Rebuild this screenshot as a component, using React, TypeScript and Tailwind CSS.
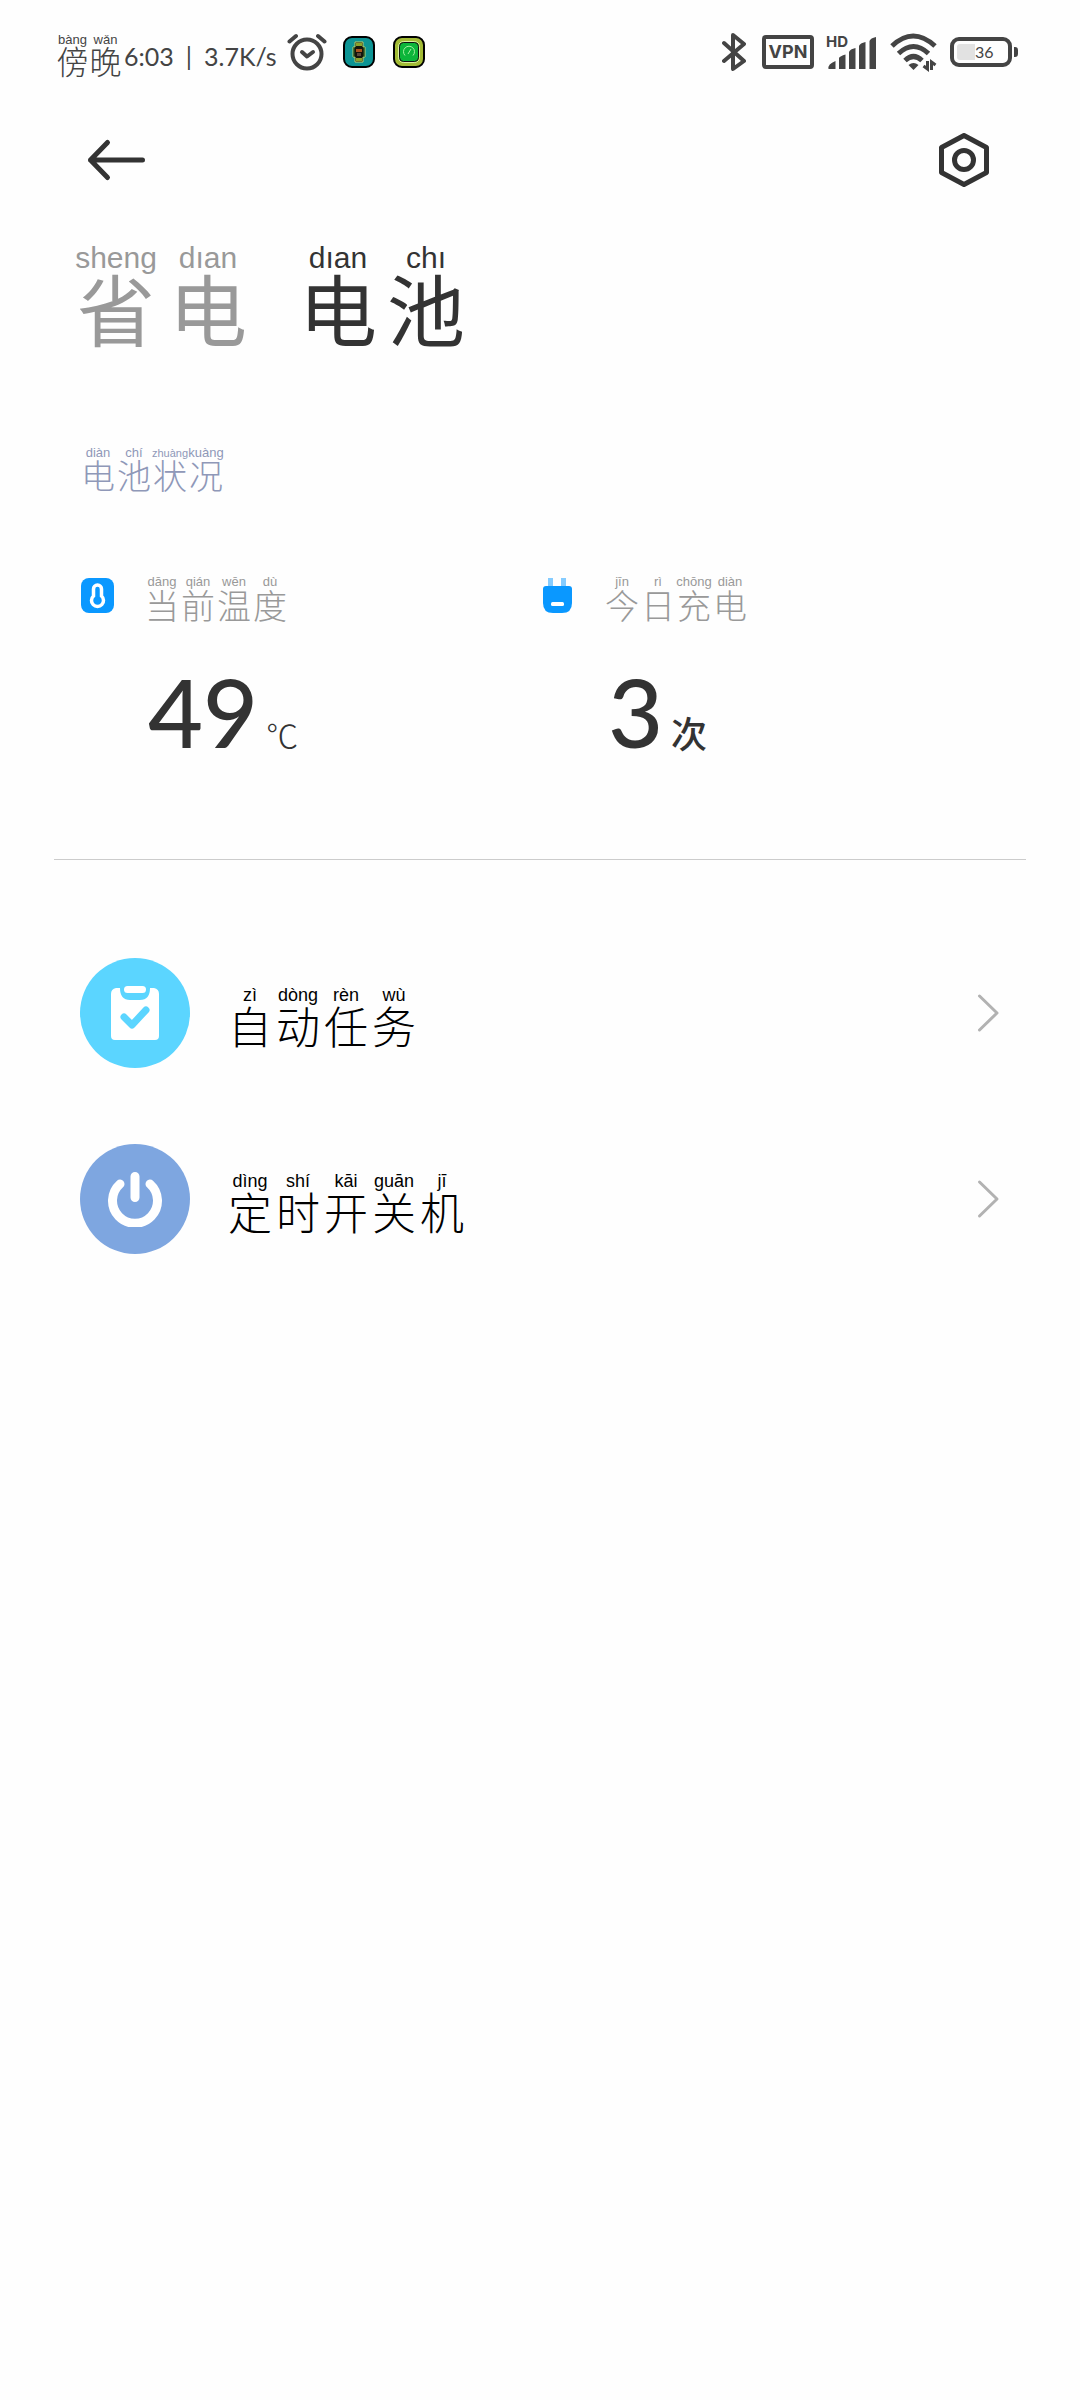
import React from "react";

type Syllable = [hanzi: string, pinyin: string];

interface PinyinProps {
  text: Syllable[];
  cell: string;
  hanzi: string;
  pinyin: string;
}

// One column per character, reading above the glyph
function Pinyin({ text, cell, hanzi, pinyin }: PinyinProps) {
  return (
    <span className="flex">
      {text.map(([char, reading], i) => (
        <span key={i} className={`flex shrink-0 flex-col items-center whitespace-nowrap ${cell}`}>
          <span className={`font-['Liberation_Sans',sans-serif] ${reading.length > 5 ? "text-[11px] leading-4" : pinyin}`}>
            {reading}
          </span>
          <span className={hanzi}>{char}</span>
        </span>
      ))}
    </span>
  );
}

function StatusBar() {
  return (
    <header className="flex h-[104px] items-center justify-between pr-[62px] pl-14 text-[#444]">
      <div className="flex items-center">
        <Pinyin
          text={[["傍", "bàng"], ["晚", "wǎn"]]}
          cell="w-[33px]"
          hanzi="text-[32px] leading-6 font-light"
          pinyin="text-[13px] leading-4"
        />
        <span className="ml-0.5 flex items-center gap-3 pt-2 font-['Lato',sans-serif] text-[25px] leading-8">
          <span>6:03</span>
          <span>|</span>
          <span>3.7K/s</span>
        </span>
        <svg className="ml-2.5 h-10 w-10" viewBox="0 0 40 40" fill="none" stroke="currentColor" strokeWidth="4" strokeLinecap="round">
          <circle cx="20" cy="22" r="14.5" />
          <path d="M2.5 9.5 9 4M31 4l6.500 5.500" />
          <path d="m15 20 5 4.500 6-4.500" strokeLinejoin="round" />
        </svg>
        <svg className="ml-4 h-8 w-8" viewBox="0 0 32 32">
          <rect x="1" y="1" width="30" height="30" rx="8" fill="#0d9494" stroke="#000" strokeWidth="2" />
          <path d="M12 6h8v5h2v10h-2v5h-8v-5h-2V11h2z" fill="#14150d" stroke="#b9cf6a" strokeWidth="1" />
          <path d="M13 7h6v3h-6zM13 22h6v3h-6z" fill="#8aa32c" />
          <path d="M11 11v10M21 11v10" stroke="#2f6a2a" strokeWidth="1" />
          <path d="M13 13h6v3h-6z" fill="#a85420" />
          <path d="M14 17h4v3h-4z" fill="#5b4a3c" />
        </svg>
        <svg className="ml-[18px] h-8 w-8" viewBox="0 0 32 32">
          <rect x="1" y="1" width="30" height="30" rx="8" fill="#a3bb35" stroke="#000" strokeWidth="2" />
          <rect x="5.500" y="5.500" width="21" height="21" rx="5" fill="none" stroke="#d9f0a0" />
          <rect x="6.500" y="6.500" width="19" height="19" rx="4" fill="#0cb53a" stroke="#111" />
          <path d="M12 19.500a5.500 5.500 0 1 1 8 0M15 18l3-5" fill="none" stroke="#a5f0a0" />
        </svg>
      </div>

      <div className="flex items-center">
        <svg className="h-10 w-6" viewBox="0 0 24 40" fill="none" stroke="currentColor" strokeWidth="4" strokeLinecap="round" strokeLinejoin="round">
          <path d="M2 11 22 29 11 37V3l11 9L2 29" />
        </svg>
        <span className="ml-4 flex h-[34px] w-[52px] items-center justify-center rounded-[4px] border-4 border-current font-['Inter',sans-serif] text-[18px] leading-5 font-bold">
          VPN
        </span>
        <span className="relative ml-3 h-10 w-[52px]">
          <span className="absolute top-0 left-0 font-['Inter',sans-serif] text-[15px] leading-5 font-bold">HD</span>
          <svg className="h-10 w-[52px]" viewBox="0 0 52 40" fill="currentColor">
            <path d="M2.500 37q-1-5 7-8v8zM13 26q1-2 6.500-3.500V37H13zM23 20q1-3 6.500-4V37H23zM33 14q1-3 6.500-4V37H33zM43.500 9q1-3 6.500-4v32h-6.500z" />
          </svg>
        </span>
        <svg className="ml-3 h-10 w-12" viewBox="0 0 48 40" fill="none" stroke="currentColor" strokeWidth="5">
          <path d="M2 14q21-20 43 0M8.500 21.500q15-14 30 0M15 28.500q8.500-8 17 0" />
          <path d="M18.500 33q5-4 10 0l-5 5z" fill="currentColor" stroke="none" />
          <path d="M37.500 29v8l-4-3M41.500 38v-8l4 3" strokeWidth="3" />
        </svg>
        <span className="ml-3 flex h-[30px] w-[62px] items-center rounded-[9px] border-4 border-current p-[3px]">
          <span className="h-4 w-[18px] rounded-l-[3px] bg-[#e2e2e2]" />
          <span className="font-['Lato',sans-serif] text-[16px] leading-5">36</span>
        </span>
        <span className="ml-0.5 h-[10px] w-1 rounded-r-[3px] bg-[#444]" />
      </div>
    </header>
  );
}

function Toolbar() {
  return (
    <div className="flex h-28 items-center justify-between pr-[90px] pl-[86px] text-[#333]">
      <button type="button" aria-label="返回">
        <svg className="h-11 w-[60px]" viewBox="0 0 60 44" fill="none" stroke="currentColor" strokeWidth="5" strokeLinecap="round" strokeLinejoin="round">
          <path d="M56.500 22H4.500M21.500 4.500 4.500 22l17 17.500" />
        </svg>
      </button>
      <button type="button" aria-label="设置">
        <svg className="h-[54px] w-[52px]" viewBox="0 0 52 54" fill="none" stroke="currentColor" strokeWidth="5" strokeLinejoin="round">
          <path d="M26 2.500 48.500 14.500v25L26 51.500 3.500 39.500v-25z" />
          <circle cx="26" cy="27" r="9.500" />
        </svg>
      </button>
    </div>
  );
}

const tabHanzi = "text-[78px] leading-[66px] font-normal";
const tabPinyin = "text-[30px] leading-8";

function Tabs() {
  return (
    <nav className="flex gap-10 pt-[26px] pl-[70px]">
      <button type="button" className="text-[#999]">
        <Pinyin text={[["省", "sheng"], ["电", "dıan"]]} cell="w-[92px]" hanzi={tabHanzi} pinyin={tabPinyin} />
      </button>
      <button type="button" className="text-[#333]" aria-current="page">
        <Pinyin text={[["电", "dıan"], ["池", "chı"]]} cell="w-[88px]" hanzi={tabHanzi} pinyin={tabPinyin} />
      </button>
    </nav>
  );
}

interface StatProps {
  icon: React.ReactNode;
  label: Syllable[];
  value: string;
  unit: string;
  unitClass: string;
}

const labelHanzi = "text-[34px] leading-7 font-light";
const labelPinyin = "text-[13px] leading-[18px]";

function Stat({ icon, label, value, unit, unitClass }: StatProps) {
  return (
    <div className="w-[460px] shrink-0">
      <div className="flex items-center">
        {icon}
        <div className="ml-7 text-[#999]">
          <Pinyin text={label} cell="w-9" hanzi={labelHanzi} pinyin={labelPinyin} />
        </div>
      </div>
      <div className="mt-8 ml-[68px] flex items-baseline gap-2 text-[#333]">
        <span className="font-['Lato',sans-serif] text-[95px] leading-[120px] font-medium">{value}</span>
        <span className={unitClass}>{unit}</span>
      </div>
    </div>
  );
}

const thermometer = (
  <svg className="h-9 w-9" viewBox="0 0 36 36">
    <rect x="1" y="0" width="33" height="35" rx="8" fill="#0a98ff" />
    <path d="M13.500 18v-7a4 4 0 0 1 8 0v7a6 6 0 1 1-8 0z" fill="none" stroke="#fff" strokeWidth="3.500" />
    <circle cx="17.500" cy="22.500" r="3" fill="#0a98ff" />
  </svg>
);

const plug = (
  <svg className="h-9 w-9" viewBox="0 0 36 36">
    <path d="M8 0h5v9H8zM21 0h5v9h-5z" fill="#85ccff" />
    <path d="M3 11q0-3 3-3h23q3 0 3 3v14q0 10-10 10h-9Q3 35 3 25z" fill="#0a98ff" />
    <rect x="11" y="24" width="13" height="4" rx="1.500" fill="#fff" />
  </svg>
);

function MenuRow({ icon, color, label }: { icon: React.ReactNode; color: string; label: Syllable[] }) {
  return (
    <li>
      <a href="#" className="flex items-center pr-20 pl-20 text-black">
        <span className={`flex h-[110px] w-[110px] items-center justify-center rounded-full ${color}`}>{icon}</span>
        <span className="ml-9 flex-1">
          <Pinyin text={label} cell="w-12" hanzi="text-[44px] leading-9 font-light" pinyin="text-[18px] leading-6" />
        </span>
        <svg className="h-10 w-6" viewBox="0 0 24 40" fill="none" stroke="#b2b2b2" strokeWidth="3" strokeLinecap="round" strokeLinejoin="round">
          <path d="M3.500 3 21 20 3.500 37" />
        </svg>
      </a>
    </li>
  );
}

const clipboard = (
  <svg className="h-14 w-14" viewBox="0 0 56 56">
    <path d="M9 3h4q0 12 10 12h10q10 0 10-12h4q5 1 5 6v42q0 4-4 4H8q-4 0-4-4V9q0-5 5-6z" fill="#fff" />
    <rect x="17" y="1" width="22" height="7" rx="3.500" fill="#fff" />
    <path d="m17 32 8 8 14-15" fill="none" stroke="#5bd5ff" strokeWidth="7" strokeLinecap="round" strokeLinejoin="round" />
  </svg>
);

const power = (
  <svg className="h-14 w-14" viewBox="0 0 56 56" fill="none" stroke="#fff" strokeWidth="9" strokeLinecap="round">
    <path d="M28 5.500v21M13 13a22.500 22.500 0 1 0 30 0" />
  </svg>
);

export default function App() {
  return (
    <div className="min-h-screen bg-[#fefefe] font-['Noto_Sans_CJK_SC',sans-serif]">
      <StatusBar />
      <Toolbar />
      <Tabs />
      <main>
        <h2 className="mt-[105px] pl-20 text-[#8f98b8]">
          <Pinyin
            text={[["电", "diàn"], ["池", "chí"], ["状", "zhuàng"], ["况", "kuàng"]]}
            cell="w-9"
            hanzi={labelHanzi}
            pinyin="text-[13px] leading-4"
          />
        </h2>
        <section className="mt-[84px] flex pl-20">
          <Stat
            icon={thermometer}
            label={[["当", "dāng"], ["前", "qián"], ["温", "wēn"], ["度", "dù"]]}
            value="49"
            unit="℃"
            unitClass="text-[32px] leading-10 font-light"
          />
          <Stat
            icon={plug}
            label={[["今", "jīn"], ["日", "rì"], ["充", "chōng"], ["电", "diàn"]]}
            value="3"
            unit="次"
            unitClass="text-[36px] leading-10 font-medium"
          />
        </section>
        <hr className="mx-[54px] mt-[88px] border-[#ccc]" />
        <ul className="mt-[98px] flex flex-col gap-[76px]">
          <MenuRow icon={clipboard} color="bg-[#5bd5ff]" label={[["自", "zì"], ["动", "dòng"], ["任", "rèn"], ["务", "wù"]]} />
          <MenuRow
            icon={power}
            color="bg-[#7ea6e0]"
            label={[["定", "dìng"], ["时", "shí"], ["开", "kāi"], ["关", "guān"], ["机", "jī"]]}
          />
        </ul>
      </main>
    </div>
  );
}
